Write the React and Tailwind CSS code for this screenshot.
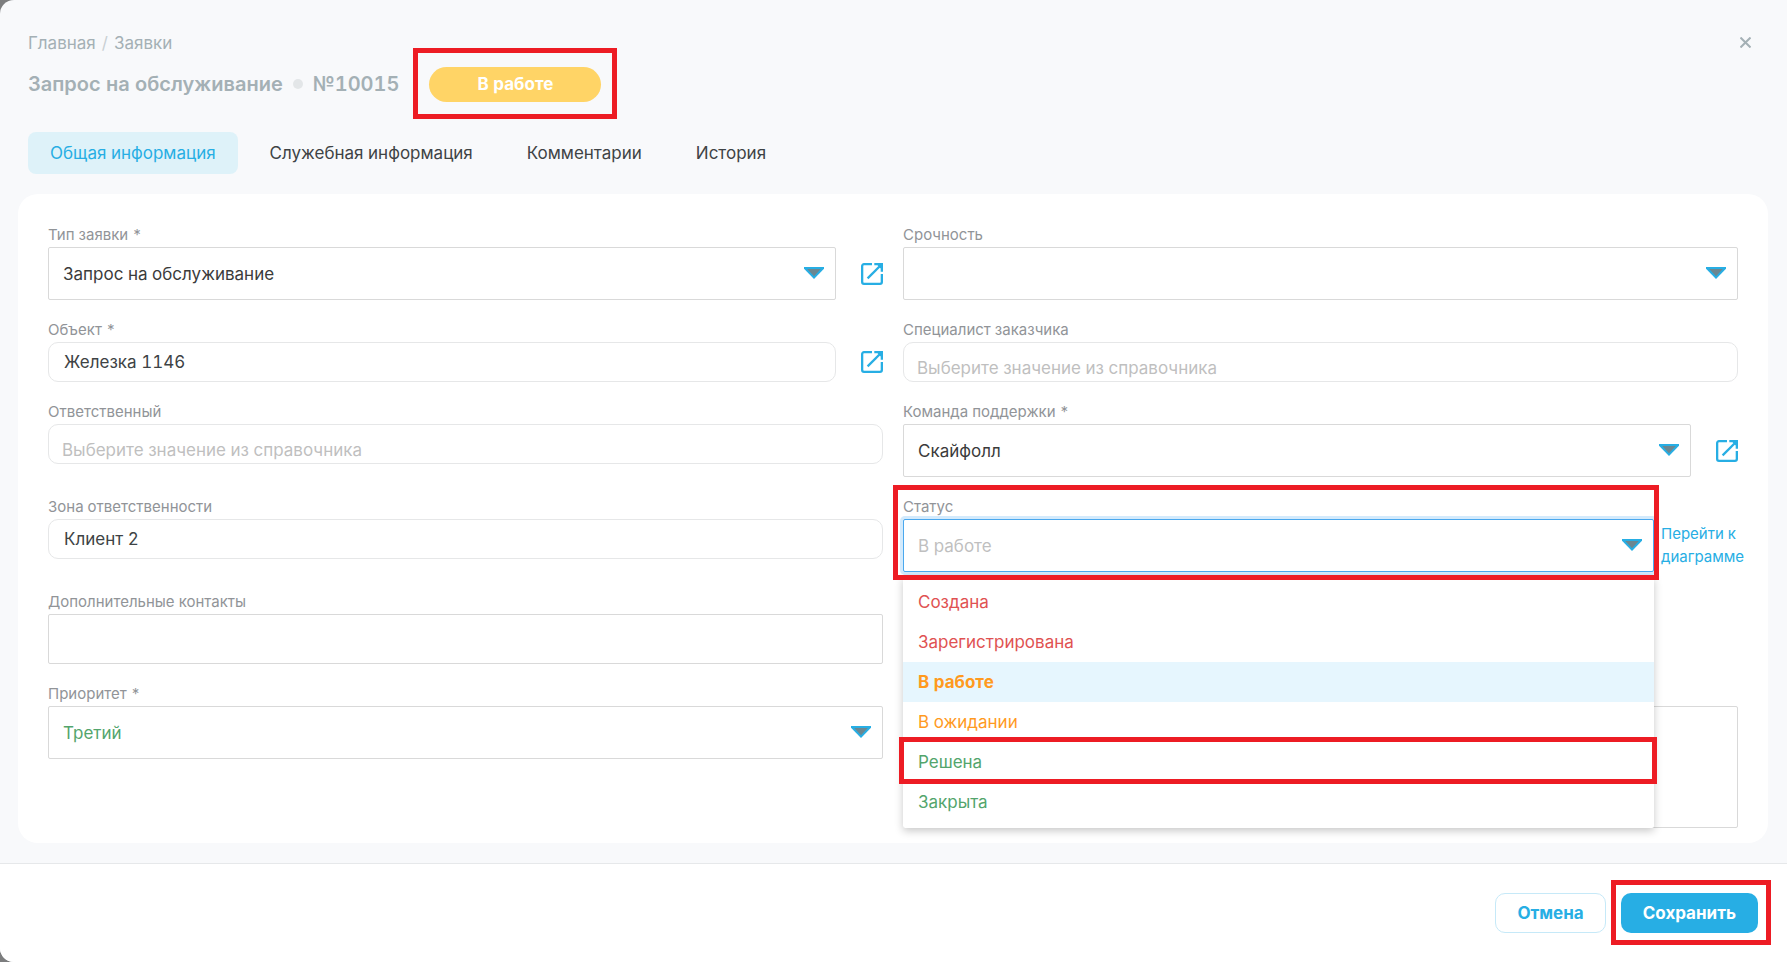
import { useState } from "react";

const TABS = ["Общая информация", "Служебная информация", "Комментарии", "История"];

const STATUSES = [
  { name: "Создана", tone: "text-[#e05252]" },
  { name: "Зарегистрирована", tone: "text-[#e05252]" },
  { name: "В работе", tone: "text-[#ff9a1f]" },
  { name: "В ожидании", tone: "text-[#ff9a1f]" },
  { name: "Решена", tone: "text-[#53a56c]", marked: true },
  { name: "Закрыта", tone: "text-[#53a56c]" },
];

const LABEL = "block pt-[2px] text-[15px] leading-[24px] text-[#919498]";
const BOX = "w-full rounded-[2px] border bg-white text-[17px] outline-none";
const ROUND = "block h-10 w-full rounded-[10px] border border-[#e6e7e8] bg-white text-[17px] text-[#3e4345] outline-none";

function Mark({ className }) {
  return <span aria-hidden="true" className={`pointer-events-none absolute border-[5px] border-[#ed1c24] ${className}`} />;
}

function Arrow() {
  return (
    <svg
      aria-hidden="true"
      viewBox="0 0 20 12"
      className="pointer-events-none absolute top-5 right-3 h-3 w-5"
    >
      <path d="M0 0H20V1.8L10 12L0 1.8Z" fill="#27aee4" />
      <path d="M3.2 2H16.8L10 9.2Z" fill="#6b8791" />
    </svg>
  );
}

function OpenLink({ label }) {
  return (
    <a href="#open" aria-label={label} className="shrink-0 text-[#27aee4]">
      <svg viewBox="0 0 22 22" className="h-[22px] w-[22px]" fill="none" stroke="currentColor" strokeWidth="2.3">
        <path d="M11 1.150H3A1.850 1.850 0 0 0 1.150 3V19A1.850 1.850 0 0 0 3 20.850H19A1.850 1.850 0 0 0 20.850 19V11" />
        <path d="M6.600 15.400L19.500 2.500" />
        <path d="M13.300 0H22V8.700H19.700V5.500L16.500 2.300H13.300Z" fill="currentColor" stroke="none" />
      </svg>
    </a>
  );
}

function SelectField({ id, label, value, tone = "text-[#3b3b3b]", link }) {
  return (
    <div>
      <label htmlFor={id} className={LABEL}>{label}</label>
      <div className="flex items-center gap-[25px]">
        <div className="relative min-w-0 flex-1">
          <select id={id} defaultValue={value} className={`${BOX} ${tone} block h-[53px] appearance-none border-[#d9d9d9] pt-[2px] pr-10 pl-[14px]`}>
            <option>{value}</option>
          </select>
          <Arrow />
        </div>
        {link && <OpenLink label={link} />}
      </div>
    </div>
  );
}

function RoundField({ id, label, value, placeholder, link }) {
  const pad = value ? "px-[15px]" : "px-[13px] pt-[11px]";
  return (
    <div>
      <label htmlFor={id} className={LABEL}>{label}</label>
      <div className="flex items-center gap-[25px]">
        <input id={id} defaultValue={value} placeholder={placeholder} className={`${ROUND} ${pad} min-w-0 flex-1 placeholder:text-[#bfbfbf]`} />
        {link && <OpenLink label={link} />}
      </div>
    </div>
  );
}

function StatusField() {
  const [current, setCurrent] = useState("В работе");
  return (
    <div className="flex items-end gap-[7px]">
      <div className="relative min-w-0 flex-1">
        <label htmlFor="status" className={LABEL}>Статус</label>
        <div className="relative">
          <input
            id="status"
            role="combobox"
            aria-expanded="true"
            aria-controls="status-list"
            placeholder={current}
            className={`${BOX} block h-[53px] border-[#4aa8ee] pr-10 pl-[14px] text-[#3b3b3b] shadow-[0_0_0_3px_#d3eafc] placeholder:text-[#bfbfbf]`}
          />
          <Arrow />
        </div>
        <div
          id="status-list"
          role="listbox"
          className="absolute inset-x-0 top-full z-10 mt-1 rounded-[2px] bg-white py-[6px] shadow-[0_3px_8px_rgba(0,0,0,0.22)]"
        >
          {STATUSES.map((s) => (
            <button
              key={s.name}
              type="button"
              role="option"
              aria-selected={s.name === current}
              onClick={() => setCurrent(s.name)}
              className={`relative block h-10 w-full px-[15px] pt-[2px] text-left text-[17px] ${s.tone} ${s.name === current ? "bg-[#e6f6fe] font-bold" : ""}`}
            >
              {s.name}
              {s.marked && <Mark className="-top-[5px] -right-[3px] -bottom-[2px] -left-1" />}
            </button>
          ))}
        </div>
        <Mark className="-top-2 -right-[5px] -bottom-2 -left-[10px] z-20" />
      </div>
      <a href="#diagram" className="flex h-[54px] w-[77px] items-center text-[15px] leading-[23px] whitespace-nowrap text-[#27aee4]">
        <span>Перейти к<br />диаграмме</span>
      </a>
    </div>
  );
}

export default function App() {
  const [tab, setTab] = useState(TABS[0]);
  return (
    <div className="min-h-screen bg-[#7c7d7e] font-['Inter','Liberation_Sans',sans-serif] tabular-nums">
      <div className="flex min-h-screen flex-col overflow-hidden rounded-l-[14px] bg-[#f8f9fb]">
        <header className="flex items-start justify-between px-7 pt-[30px]">
          <div>
            <nav className="flex gap-[6px] text-[17px] leading-[26px] text-[#a4b0b5]">
              <a href="#home">Главная</a>
              <span className="text-[#c9d0d3]">/</span>
              <a href="#requests">Заявки</a>
            </nav>
            <div className="mt-[11px] flex items-center text-[#a4b0b5]">
              <h1 className="flex items-center pb-[2px] text-[20px] font-semibold">
                Запрос на обслуживание
                <span className="mx-[10px] h-[10px] w-[10px] rounded-full bg-[#e3e6e8]" />
                №10015
              </h1>
              <div className="relative ml-[30px]">
                <span className="flex h-[35px] w-[172px] items-center justify-center rounded-full bg-[#ffd466] text-[17px] font-bold text-white">
                  В работе
                </span>
                <Mark className="-top-[19px] -right-4 -bottom-[17px] -left-4" />
              </div>
            </div>
          </div>
          <button type="button" aria-label="Закрыть" className="mt-[7px] mr-2 text-[#a4b0b5]">
            <svg viewBox="0 0 11 11" className="h-[11px] w-[11px]" fill="none" stroke="currentColor" strokeWidth="2">
              <path d="M0.500 0.500L10.500 10.500M10.500 0.500L0.500 10.500" />
            </svg>
          </button>
        </header>

        <div role="tablist" className="mt-[30px] flex gap-[10px] px-7">
          {TABS.map((t) => (
            <button
              key={t}
              type="button"
              role="tab"
              aria-selected={t === tab}
              onClick={() => setTab(t)}
              className={`h-[42px] rounded-lg px-[22px] pt-[2px] text-[17px] ${t === tab ? "bg-[#def2f9] text-[#27aee4]" : "text-[#3e4345]"}`}
            >
              {t}
            </button>
          ))}
        </div>

        <main className="flex-1 px-[18px] pt-5 pb-5">
          <form className="mr-px grid grid-cols-2 gap-x-5 gap-y-4 rounded-[20px] bg-white px-[30px] pt-[27px] pb-[15px]">
            <SelectField id="type" label="Тип заявки *" value="Запрос на обслуживание" link="Открыть тип заявки" />
            <SelectField id="urgency" label="Срочность" value="" />
            <RoundField id="object" label="Объект *" value="Железка 1146" link="Открыть объект" />
            <RoundField id="specialist" label="Специалист заказчика" placeholder="Выберите значение из справочника" />
            <RoundField id="owner" label="Ответственный" placeholder="Выберите значение из справочника" />
            <SelectField id="team" label="Команда поддержки *" value="Скайфолл" link="Открыть команду" />
            <RoundField id="zone" label="Зона ответственности" value="Клиент 2" />
            <StatusField />
            <div>
              <label htmlFor="contacts" className={LABEL}>Дополнительные контакты</label>
              <input id="contacts" className={`${BOX} block h-[50px] border-[#d9d9d9] px-[14px]`} />
            </div>
            <div />
            <SelectField id="priority" label="Приоритет *" value="Третий" tone="text-[#53a56c]" />
            <div className="pt-[26px]">
              <textarea aria-label="Описание" className={`${BOX} block h-[122px] resize-none border-[#d9d9d9] px-[14px] py-3`} />
            </div>
          </form>
        </main>

        <footer className="flex justify-end gap-[15px] border-t border-[#e6e8ea] bg-white py-[29px] pr-[29px]">
          <button type="button" className="h-10 rounded-[10px] border border-[#c6e9f8] px-[21px] pt-[2px] text-[17px] font-bold text-[#27aee4]">
            Отмена
          </button>
          <div className="relative">
            <button type="submit" className="h-10 rounded-[10px] bg-[#27aee4] px-[22px] pt-[2px] text-[17px] font-bold text-white">
              Сохранить
            </button>
            <Mark className="-top-[13px] -right-[13px] -bottom-3 -left-[10px]" />
          </div>
        </footer>
      </div>
    </div>
  );
}
